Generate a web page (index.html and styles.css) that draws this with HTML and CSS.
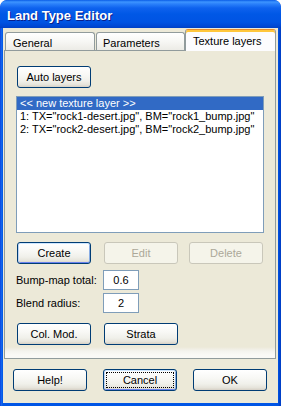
FILE: index.html
```html
<!DOCTYPE html>
<html lang="en">
<head>
    <meta charset="UTF-8">
    <title>Land Type Editor</title>
    <link rel="stylesheet" href="styles.css">
</head>
<body>
    <div class="window">
        <div class="titlebar">
            <span class="title">Land Type Editor</span>
        </div>

        <div class="client">
            <div class="tabs">
                <div class="tab tab-general">General</div>
                <div class="tab tab-params">Parameters</div>
                <div class="tab tab-active">Texture layers</div>
            </div>

            <div class="panel">
                <button class="btn btn-auto">Auto layers</button>

                <div class="listbox">
                    <div class="item selected">&lt;&lt; new texture layer &gt;&gt;</div>
                    <div class="item">1: TX="rock1-desert.jpg", BM="rock1_bump.jpg"</div>
                    <div class="item">2: TX="rock2-desert.jpg", BM="rock2_bump.jpg"</div>
                </div>

                <div class="row row-actions">
                    <button class="btn btn-default">Create</button>
                    <button class="btn btn-edit" disabled>Edit</button>
                    <button class="btn btn-delete" disabled>Delete</button>
                </div>

                <div class="field field-bump">
                    <label>Bump-map total:</label>
                    <input type="text" value="0.6">
                </div>
                <div class="field field-blend">
                    <label>Blend radius:</label>
                    <input type="text" value="2">
                </div>

                <div class="row row-extra">
                    <button class="btn">Col. Mod.</button>
                    <button class="btn btn-strata">Strata</button>
                </div>
            </div>

            <div class="row dialog-buttons">
                <button class="btn">Help!</button>
                <button class="btn btn-focus">Cancel</button>
                <button class="btn">OK</button>
            </div>
        </div>
    </div>
</body>
</html>
```

FILE: styles.css
```css
html, body {
    margin: 0;
    padding: 0;
    background: #ffffff;
}
body {
    font-family: "Liberation Sans", Arial, sans-serif;
    font-size: 11px;
    color: #000;
}

/* XP luna window frame */
.window {
    width: 281px;
    height: 406px;
    box-sizing: border-box;
    padding: 0 3px 3px 3px;
    border-radius: 7px 7px 0 0;
    background: linear-gradient(to right, #0831D9 0, #166AEE 1px, #0055E5 3px, #0055E5 278px, #0040C8 280px);
    overflow: hidden;
}
.titlebar {
    height: 28px;
    margin: 0 -3px;
    padding-left: 7px;
    display: flex;
    align-items: center;
    border-radius: 7px 7px 0 0;
    background: linear-gradient(to bottom, #0A5CE6 0, #3D95FF 2px, #2A80FA 4px, #0E62EE 8px, #0058E6 14px, #0054E3 22px, #0048D4 26px, #0040C4 28px);
}
.title {
    color: #fff;
    font-weight: bold;
    font-size: 13px;
    text-shadow: 1px 1px 0 #0A1E8A;
    margin-top: 2px;
}

.client {
    height: 375px;
    background: #ECE9D8;
    display: flex;
    flex-direction: column;
}

/* tabs */
.tabs {
    height: 22px;
    display: flex;
    align-items: flex-end;
    padding-left: 2px;
}
.tab {
    height: 18px;
    box-sizing: border-box;
    padding: 4px 0 0 6px;
    border: 1px solid #919B9C;
    border-bottom: none;
    border-radius: 3px 3px 0 0;
    background: linear-gradient(to bottom, #FFFFFF, #F7F7F4 50%, #ECEBE6);
    line-height: 12px;
}
.tab-general {
    width: 90px;
    padding-left: 7px;
    margin-right: 1px;
}
.tab-params {
    width: 89px;
}
.tab-active {
    width: 91px;
    height: 22px;
    margin-bottom: -1px;
    padding: 5px 0 0 7px;
    background: #FCFCFE;
    border-top: 1px solid #E68B2C;
    box-shadow: inset 0 2px 0 #FFC73C;
    position: relative;
    z-index: 1;
}

/* tab page */
.panel {
    width: 272px;
    height: 309px;
    margin-left: 1px;
    box-sizing: border-box;
    border: 1px solid #919B9C;
    border-top-color: #919B9C;
    background: linear-gradient(to bottom, #ECE9D8 0, #ECE9D8 296px, #F4F3EE 300px, #FAF9F6 304px);
    display: flex;
    flex-direction: column;
    align-items: flex-start;
}

/* buttons */
.btn {
    width: 74px;
    height: 22px;
    padding: 0;
    border: 1px solid #003C74;
    border-radius: 3px;
    background: linear-gradient(to bottom, #FFFFFF 0, #F8F8F5 40%, #F0F0EA 70%, #E6E4DB 88%, #D6D0C5 100%);
    font-family: "Liberation Sans", Arial, sans-serif;
    font-size: 11px;
    color: #000;
    cursor: pointer;
}
.btn-default {
    box-shadow: inset 0 1px 0 #CEE7FF, inset 1px 0 0 #BCD4F6, inset -1px 0 0 #89ADE4, inset 0 -1px 0 #6982EE;
}
.btn-focus {
    box-shadow: inset 0 1px 0 #CEE7FF, inset 1px 0 0 #BCD4F6, inset -1px 0 0 #89ADE4, inset 0 -1px 0 #6982EE;
    outline: 1px dotted #000;
    outline-offset: -4px;
}
.btn:disabled {
    border-color: #C9C7BA;
    background: #F5F4EA;
    color: #ACA899;
    cursor: default;
}
.btn-auto {
    margin: 15px 0 0 12px;
}

/* list box */
.listbox {
    width: 248px;
    height: 137px;
    margin: 8px 0 0 11px;
    box-sizing: border-box;
    border: 1px solid #7F9DB9;
    background: #fff;
}
.item {
    height: 13px;
    line-height: 13px;
    padding-left: 3px;
    white-space: nowrap;
}
.item.selected {
    background: #316AC5;
    color: #fff;
}

.row {
    display: flex;
}
.row-actions {
    margin: 9px 0 0 12px;
}
.btn-edit {
    margin-left: 13px;
}
.btn-delete {
    margin-left: 11px;
}

/* numeric fields */
.field {
    display: flex;
    align-items: center;
    height: 20px;
    margin-left: 11px;
}
.field-bump {
    margin-top: 6px;
}
.field-blend {
    margin-top: 3px;
}
.field label {
    width: 87px;
}
.field input {
    width: 36px;
    height: 20px;
    box-sizing: border-box;
    border: 1px solid #7F9DB9;
    padding: 0;
    text-align: center;
    font-family: "Liberation Sans", Arial, sans-serif;
    font-size: 11px;
    color: #000;
    background: #fff;
}

.row-extra {
    margin: 10px 0 0 12px;
}
.btn-strata {
    margin-left: 13px;
}

.dialog-buttons {
    margin: 10px 0 0 10px;
    gap: 16px;
}
```
